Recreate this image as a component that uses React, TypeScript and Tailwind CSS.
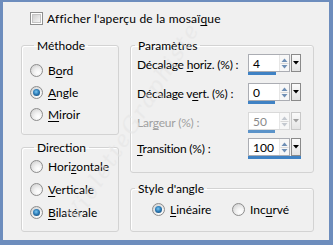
import React from "react";

function Radio({ checked = false }: { checked?: boolean }) {
  return (
    <span className="flex h-[13px] w-[13px] shrink-0 items-center justify-center rounded-full border border-[#8d8d8d] bg-[radial-gradient(circle_at_65%_70%,#ffffff_0%,#f2f2f2_35%,#c9c9c9_100%)]">
      {checked && (
        <span className="h-[7px] w-[7px] rounded-full bg-[radial-gradient(circle_at_45%_40%,#7cc8f2_0%,#2e7db8_45%,#0d3a60_100%)]" />
      )}
    </span>
  );
}

function RadioRow({ checked, children, h }: { checked?: boolean; children: React.ReactNode; h: string }) {
  return (
    <div className={`flex items-center gap-[5px] ${h}`}>
      <Radio checked={checked} />
      <span>{children}</span>
    </div>
  );
}

function Arrows({ disabled }: { disabled?: boolean }) {
  const c = disabled ? "#c4c9d0" : "#6f8fb5";
  return (
    <div className="flex h-[16px] w-[10px] flex-col items-center justify-center border-l border-[#e6e6e6] bg-[#f7f7f7]">
      <svg width="9" height="15" viewBox="0 0 9 15">
        <path d="M1.5 6 L4.5 2.5 L7.5 6 Z" fill={c} />
        <line x1="0.5" y1="7.5" x2="8.5" y2="7.5" stroke="#d8d8d8" />
        <path d="M1.5 9 L4.5 12.5 L7.5 9 Z" fill={c} />
      </svg>
    </div>
  );
}

function Spin({ value, pct, disabled = false }: { value: string; pct: number; disabled?: boolean }) {
  return (
    <div className="flex w-[53px] flex-col">
      <div className="flex h-[18px]">
        <div className={`flex flex-1 items-center border ${disabled ? "border-[#d9d9d9]" : "border-[#abadb3]"} bg-white`}>
          <span className={`flex-1 pl-[4px] ${disabled ? "text-[#8a8a8a]" : "text-black"}`}>{value}</span>
          <Arrows disabled={disabled} />
        </div>
        <div className={`ml-[1px] flex w-[10px] items-center justify-center border ${disabled ? "border-[#c8c8c8]" : "border-[#8a8a8a]"} bg-[linear-gradient(#fafafa,#e4e4e4)]`}>
          <svg width="6" height="4" viewBox="0 0 6 4">
            <path d="M0 0 L6 0 L3 3.5 Z" fill={disabled ? "#a0a0a0" : "#000"} />
          </svg>
        </div>
      </div>
      <div className="h-[3px]">
        <div className={`h-[3px] ${disabled ? "bg-[#5b93c9]" : "bg-[#3f82c4]"}`} style={{ width: `${pct}%` }} />
      </div>
    </div>
  );
}

function ParamRow({ label, value, pct, disabled, mt }: { label: React.ReactNode; value: string; pct: number; disabled?: boolean; mt: string }) {
  return (
    <div className={`flex h-[21px] items-center ${mt}`}>
      <div className={`w-[117px] whitespace-nowrap pl-[6px] tracking-[-0.2px] ${disabled ? "text-[#a0a0a0]" : "text-black"}`}>{label}</div>
      <Spin value={value} pct={pct} disabled={disabled} />
    </div>
  );
}

const U = ({ children }: { children: React.ReactNode }) => <span className="underline underline-offset-[2px]">{children}</span>;

export default function App() {
  return (
    <div className="relative h-[245px] w-[333px] overflow-hidden bg-[#6d8dbd] pb-[5px] pl-[3px] pr-[4px] pt-[2px] font-['Lato','Open_Sans',sans-serif] text-[12px] leading-[15px] text-black">
      <div className="flex h-full w-full flex-col bg-[#f0f0f0]">
        <div className="ml-[27px] mt-[9px] flex h-[15px] items-center gap-[4px]">
          <span className="flex h-[13px] w-[13px] items-center justify-center border border-[#8e8f8f] bg-white">
            <span className="h-[9px] w-[9px] border border-[#c4c4c4] bg-[linear-gradient(135deg,#cfcfcf,#f6f6f6)]" />
          </span>
          <span className="tracking-[0.2px]">
            Afficher l'aperçu de la mosaï<U>q</U>ue
          </span>
        </div>

        <div className="mt-[12px] flex">
          <div className="ml-[18px] flex w-[98px] flex-col">
            <fieldset className="h-[97px] rounded-[3px] border border-[#d3d3d3] pl-[8px] shadow-[inset_1px_1px_0_#ffffff]">
              <legend className="ml-[4px] px-[3px]">Méthode</legend>
              <div className="mt-[6px]">
                <RadioRow h="h-[22px]">
                  B<U>o</U>rd
                </RadioRow>
                <RadioRow h="h-[22px]" checked>
                  <U>A</U>ngle
                </RadioRow>
                <RadioRow h="h-[22px]">
                  <U>M</U>iroir
                </RadioRow>
              </div>
            </fieldset>
            <fieldset className="mt-[5px] h-[92px] rounded-[3px] border border-[#d3d3d3] pl-[8px] shadow-[inset_1px_1px_0_#ffffff]">
              <legend className="ml-[4px] px-[3px]">Direction</legend>
              <div>
                <RadioRow h="h-[23px]">
                  Hori<U>z</U>ontale
                </RadioRow>
                <RadioRow h="h-[23px]">
                  <U>V</U>erticale
                </RadioRow>
                <RadioRow h="h-[23px]" checked>
                  <U>B</U>ilatérale
                </RadioRow>
              </div>
            </fieldset>
          </div>

          <div className="ml-[11px] flex w-[184px] flex-col">
            <fieldset className="h-[135px] rounded-[3px] border border-[#d3d3d3] shadow-[inset_1px_1px_0_#ffffff]">
              <legend className="ml-[4px] px-[3px]">Paramètres</legend>
              <ParamRow
                mt="mt-[1px]"
                label={
                  <>
                    Décalage <U>h</U>oriz. (%) :
                  </>
                }
                value="4"
                pct={52}
              />
              <ParamRow
                mt="mt-[8px]"
                label={
                  <>
                    Décalage v<U>e</U>rt. (%) :
                  </>
                }
                value="0"
                pct={50}
              />
              <ParamRow
                mt="mt-[8px]"
                label={
                  <>
                    Lar<U>g</U>eur (%) :
                  </>
                }
                value="50"
                pct={50}
                disabled
              />
              <ParamRow
                mt="mt-[5px]"
                label={
                  <>
                    <U>T</U>ransition (%) :
                  </>
                }
                value="100"
                pct={100}
              />
            </fieldset>
            <fieldset className="mt-[8px] h-[51px] rounded-[3px] border border-[#d3d3d3] shadow-[inset_1px_1px_0_#ffffff]">
              <legend className="ml-[4px] px-[3px]">Style d'angle</legend>
              <div className="mt-[2px] flex h-[22px] items-center pl-[21px]">
                <div className="flex w-[80px] items-center gap-[5px]">
                  <Radio checked />
                  <span>
                    <U>L</U>inéaire
                  </span>
                </div>
                <div className="flex items-center gap-[5px]">
                  <Radio />
                  <span>
                    Inc<U>u</U>rvé
                  </span>
                </div>
              </div>
            </fieldset>
          </div>
        </div>
      </div>
      <div className="pointer-events-none absolute left-[72px] top-[212px] origin-left -rotate-[58deg] whitespace-nowrap font-['DejaVu_Serif',serif] text-[22px] italic tracking-[2px] text-[#e6e6e6] opacity-60">
        VioletteGraphiste
      </div>
    </div>
  );
}
